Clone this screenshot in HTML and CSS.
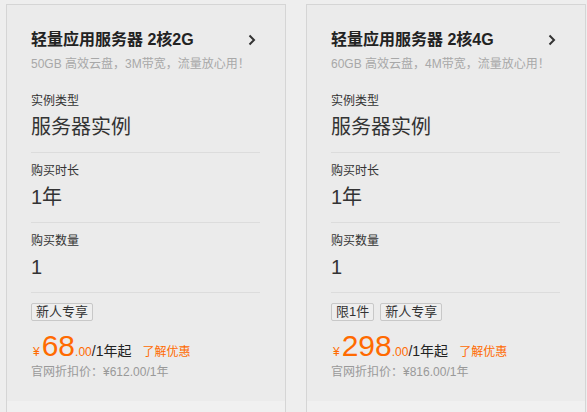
FILE: index.html
```html
<!DOCTYPE html>
<html lang="zh-CN">
<head>
<meta charset="utf-8">
<title>轻量应用服务器</title>
<link rel="stylesheet" href="styles.css">
</head>
<body>
<div class="cards">
  <div class="card">
    <div class="card-body">
      <div class="head">
        <div class="title">轻量应用服务器 2核2G</div>
        <svg class="chev" width="8" height="12" viewBox="0 0 8 12"><path d="M1.5 1.5 L6 6 L1.5 10.5" fill="none" stroke="#333" stroke-width="2"/></svg>
      </div>
      <div class="sub">50GB 高效云盘，3M带宽，流量放心用！</div>
      <div class="sec first">
        <div class="label">实例类型</div>
        <div class="value">服务器实例</div>
      </div>
      <div class="sec">
        <div class="label">购买时长</div>
        <div class="value">1年</div>
      </div>
      <div class="sec">
        <div class="label">购买数量</div>
        <div class="value">1</div>
      </div>
      <div class="sec foot">
        <div class="tags"><span class="tag">新人专享</span></div>
        <div class="price"><span class="yen">¥</span><span class="big">68</span><span class="dec">.00</span><span class="unit">/1年起</span><a class="more">了解优惠</a></div>
        <div class="orig">官网折扣价：¥612.00/1年</div>
      </div>
    </div>
    <div class="card-bottom"></div>
  </div>
  <div class="card">
    <div class="card-body">
      <div class="head">
        <div class="title">轻量应用服务器 2核4G</div>
        <svg class="chev" width="8" height="12" viewBox="0 0 8 12"><path d="M1.5 1.5 L6 6 L1.5 10.5" fill="none" stroke="#333" stroke-width="2"/></svg>
      </div>
      <div class="sub">60GB 高效云盘，4M带宽，流量放心用！</div>
      <div class="sec first">
        <div class="label">实例类型</div>
        <div class="value">服务器实例</div>
      </div>
      <div class="sec">
        <div class="label">购买时长</div>
        <div class="value">1年</div>
      </div>
      <div class="sec">
        <div class="label">购买数量</div>
        <div class="value">1</div>
      </div>
      <div class="sec foot">
        <div class="tags"><span class="tag">限1件</span><span class="tag">新人专享</span></div>
        <div class="price"><span class="yen">¥</span><span class="big">298</span><span class="dec">.00</span><span class="unit">/1年起</span><a class="more">了解优惠</a></div>
        <div class="orig">官网折扣价：¥816.00/1年</div>
      </div>
    </div>
    <div class="card-bottom"></div>
  </div>
</div>
</body>
</html>
```

FILE: styles.css
```css
html, body {
  margin: 0;
  padding: 0;
  background: #eeeeee;
  font-family: "Liberation Sans", "Noto Sans CJK SC", sans-serif;
  color: #333;
}
.cards {
  display: flex;
  gap: 20px;
  padding: 4px 0 0 6px;
}
.card {
  width: 278px;
  border: 1px solid #d5d5d5;
  background: #ebebeb;
  display: flex;
  flex-direction: column;
}
.card-body {
  padding: 24px 25px 20px 24px;
}
.card-bottom {
  height: 40px;
  background: #f0f0f0;
}
.head {
  display: flex;
  align-items: center;
  justify-content: space-between;
  height: 22px;
}
.title {
  font-size: 16px;
  font-weight: bold;
  color: #222;
  line-height: 22px;
}
.chev {
  margin-right: 4px;
  display: block;
}
.sub {
  margin-top: 4px;
  font-size: 12px;
  line-height: 18px;
  color: #a8a8a8;
}
.sec {
  border-top: 1px solid #dcdcdc;
  padding: 9px 0 11px;
}
.sec.first {
  border-top: none;
  padding-top: 19px;
}
.label {
  font-size: 12px;
  line-height: 18px;
  color: #333;
}
.value {
  margin-top: 3px;
  font-size: 20px;
  line-height: 28px;
  color: #333;
}
.foot {
  padding-top: 10px;
  padding-bottom: 0;
}
.tags {
  display: flex;
  gap: 6px;
}
.tag {
  font-size: 13px;
  line-height: 16px;
  padding: 0 4px;
  border: 1px solid #c8c8c8;
  border-radius: 2px;
  background: #eeeeee;
  color: #333;
}
.price {
  margin-top: 8px;
  height: 34px;
  line-height: 34px;
  white-space: nowrap;
}
.yen {
  font-size: 12px;
  color: #ff6a00;
  margin: 0 2px 0 2px;
}
.big {
  font-size: 30px;
  color: #ff6a00;
}
.dec {
  font-size: 12px;
  color: #ff6a00;
}
.unit {
  font-size: 14px;
  color: #222;
}
.more {
  font-size: 12px;
  color: #ff6a00;
  margin-left: 11px;
}
.orig {
  font-size: 12px;
  line-height: 18px;
  color: #999;
}
```
